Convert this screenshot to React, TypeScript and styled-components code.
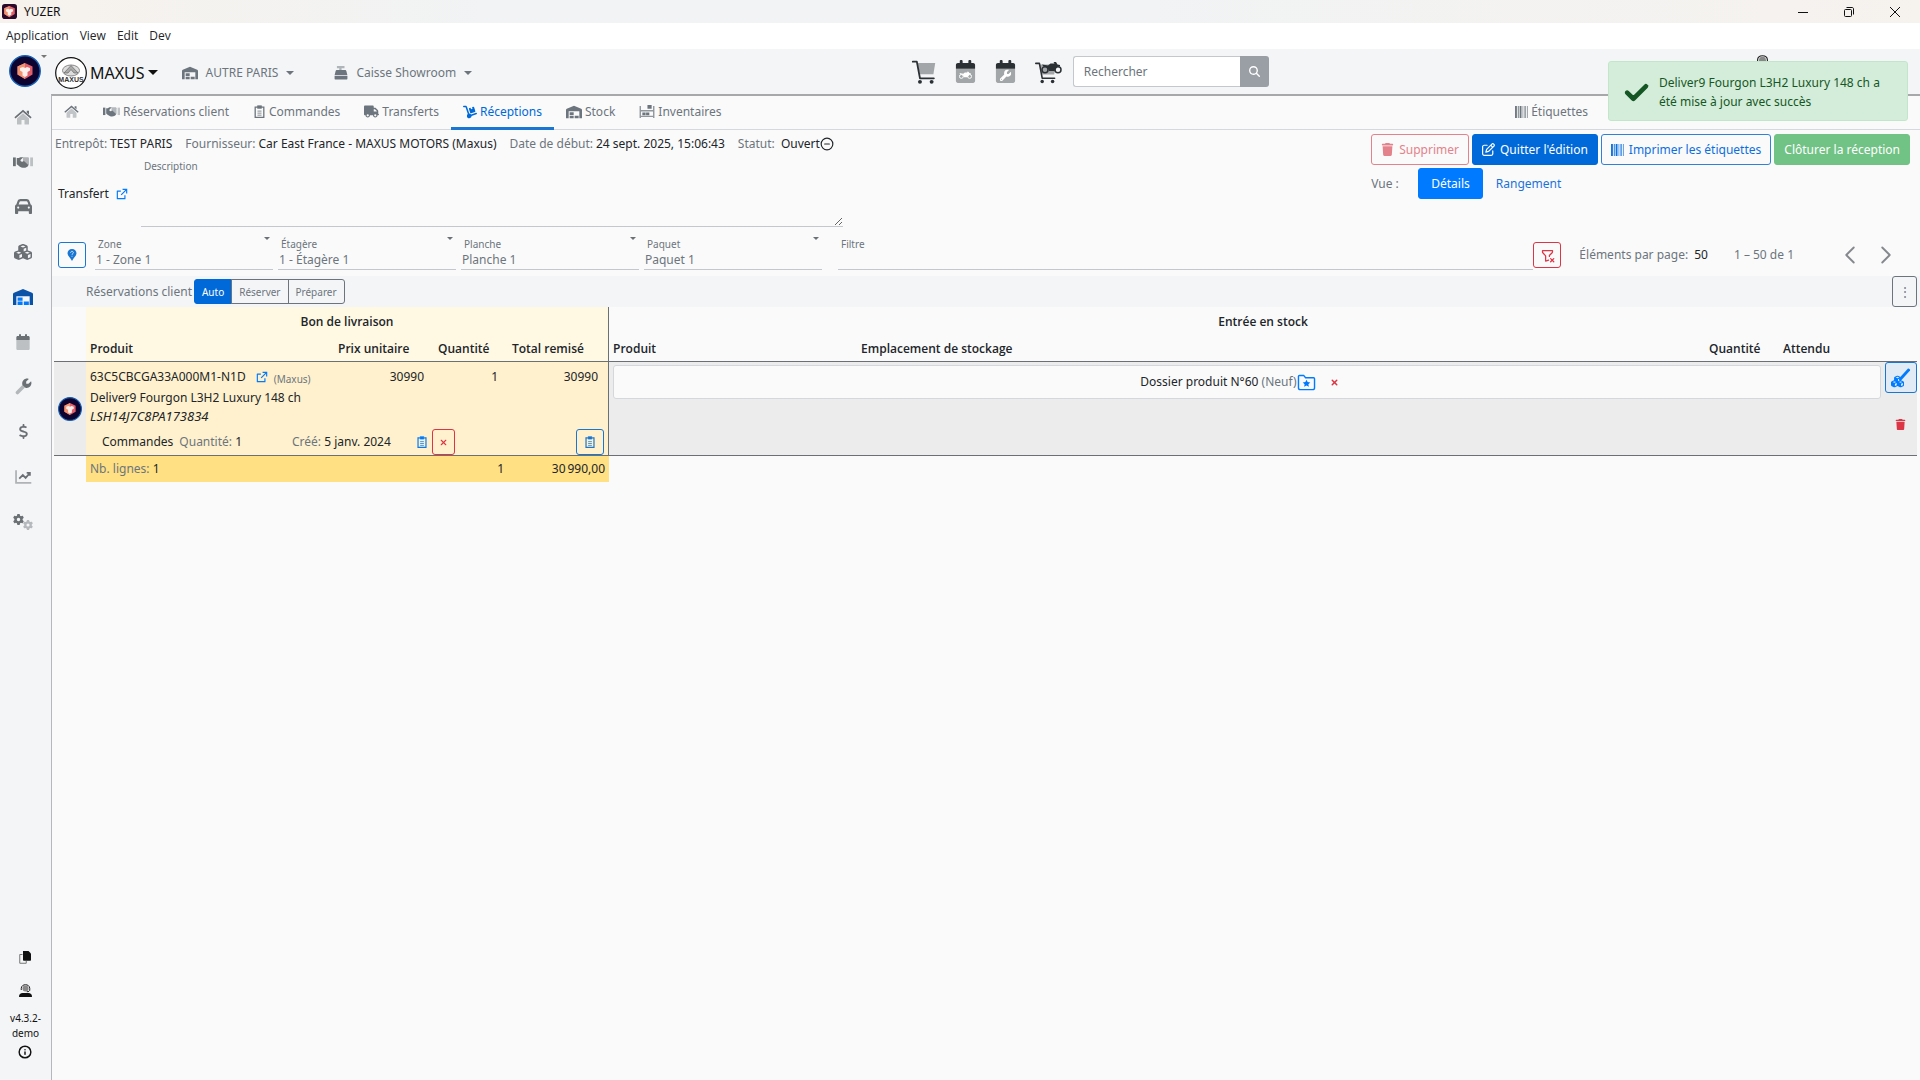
import React from 'react';
import styled, { createGlobalStyle, css } from 'styled-components';
import {
  FaCar,
  FaCheck,
  FaCubes,
  FaDollarSign,
  FaDolly,
  FaMagnifyingGlass,
  FaRegPenToSquare,
  FaTrash,
  FaTruck,
  FaWrench,
  FaGear,
} from 'react-icons/fa6';
import { RiExternalLinkLine } from 'react-icons/ri';
import { TbFilterX } from 'react-icons/tb';
import { CircleMinus, Info, ChevronLeft, ChevronRight, X } from 'lucide-react';

const c = {
  text: '#212529',
  muted: '#6c757d',
  line: '#c4c8cc',
  dark: '#6b7075',
  blue: '#007bff',
  blueDark: '#0069d9',
  red: '#dc3545',
  bar: '#f4f5f7',
  page: '#fafafa',
};

const GlobalStyle = createGlobalStyle`
  *, *::before, *::after { box-sizing: border-box; }
  body {
    margin: 0;
    font-family: "Noto Sans", "Open Sans", sans-serif;
    font-size: 12px;
    line-height: 18px;
    color: ${c.text};
    background: ${c.page};
  }
  button, input, select, textarea { font: inherit; color: inherit; }
  button { cursor: pointer; }
  a { color: inherit; text-decoration: none; }
  svg { flex: none; display: block; }
`;

/* ---------- Icons ---------- */

type IconProps = { size?: number };

const HomeIcon = ({ size = 18 }: IconProps) => (
  <svg width={size} height={size} viewBox="0 0 24 24" fill="currentColor" aria-hidden>
    <path opacity=".4" d="M12 7 4 14v7.200c0 .5.400.8.800.8H10v-6h4v6h5.200c.5 0 .8-.4.8-.8V14z" />
    <path d="M12 2.200 23.500 12.300l-1.500 1.800L12 5.400 2 14.100.5 12.300z" />
    <path d="M17 3.500h3v5l-3-2.600z" />
  </svg>
);

const HandsIcon = ({ size = 20 }: IconProps) => (
  <svg width={size} height={size} viewBox="0 0 640 512" fill="currentColor" aria-hidden>
    <path d="M0 110h90v280H0z" />
    <path opacity=".4" d="M550 110h90v280h-90z" />
    <path opacity=".5" d="M320 100h170l20 30v230H320z" />
    <path d="M120 130h60l60-30h90l-90 90c-10 60 70 70 110 30l140 130c0 60-90 100-180 90-50 0-120-50-190-110z" />
  </svg>
);

const WarehouseIcon = ({ size = 20, roof = 'currentColor' }: IconProps & { roof?: string }) => (
  <svg width={size} height={size} viewBox="0 0 24 24" fill="currentColor" aria-hidden>
    <path fill={roof} d="M12 2.500 1.200 7C.5 7.300 0 8 0 8.700V21.500h4V11h16v10.500h4V8.700c0-.7-.5-1.400-1.200-1.700z" />
    <path d="M5.500 12.500h6v4h-6zM5.500 17.500h6v4h-6zM13 17.500h6v4h-6z" />
  </svg>
);

const CalendarIcon = ({ size = 18, children }: IconProps & { children?: React.ReactNode }) => (
  <svg width={size} height={size} viewBox="0 0 24 24" fill="currentColor" aria-hidden>
    <path opacity=".4" d="M2 9h20v13c0 1-1 2-2 2H4c-1 0-2-1-2-2z" />
    <path d="M6 1c0-1.300 3-1.300 3 0v2h6V1c0-1.300 3-1.300 3 0v2h2c1 0 2 1 2 2v4H2V5c0-1 1-2 2-2h2z" />
    {children}
  </svg>
);

const Moto = ({ x, y, width, color }: { x: number; y: number; width: number; color: string }) => (
  <svg x={x} y={y} width={width} height={(width * 24) / 42} viewBox="0 0 42 24" fill={color} aria-hidden>
    <circle cx="8" cy="15.500" r="6" fill="none" stroke={color} strokeWidth="3" />
    <circle cx="34" cy="15.500" r="6" fill="none" stroke={color} strokeWidth="3" />
    <path d="M2 5 14 7l5-4h8l-2-3h5l3 5 5 1v3h-5l-6 9H16l-3-7-8-2z" />
  </svg>
);

const WrenchIcon = () => (
  <svg width={17} height={17} viewBox="0 0 24 24" aria-hidden>
    <path d="M3.500 20.500 14 10" stroke="#b4b7ba" strokeWidth="5" strokeLinecap="round" fill="none" />
    <path d="M19.500 1.300 15.800 5v3.200H19l3.700-3.700c2 5.500-2.500 10.700-8 9.200L10.500 10C8.800 4.500 14-.8 19.500 1.300z" fill="currentColor" />
  </svg>
);

const ChartIcon = () => (
  <svg width={17} height={17} viewBox="0 0 24 24" fill="none" stroke="currentColor" aria-hidden>
    <path opacity=".5" d="M1.500 3v18H23" strokeWidth="2.500" />
    <path d="m6 15 5-5 4 4 6-7M16.500 7H21v4" strokeWidth="2.500" />
  </svg>
);

const GearsIcon = () => (
  <svg width={20} height={16} viewBox="0 0 40 32" fill="currentColor" aria-hidden>
    <FaGear size={22} x={0} y={0} />
    <g opacity=".45">
      <FaGear size={20} x={20} y={12} />
    </g>
  </svg>
);

const CartShape = () => (
  <>
    <path opacity=".4" fill="#2b3035" d="M6 4.500h20l-2 12.500H9z" />
    <path d="M1 3h4.500L9 21.500h15.500" fill="none" stroke="#2b3035" strokeWidth="2" strokeLinecap="round" strokeLinejoin="round" />
    <circle cx="9" cy="25.500" r="2.200" fill="#2b3035" />
    <circle cx="22" cy="25.500" r="2.200" fill="#2b3035" />
  </>
);

const CartIcon = () => (
  <svg width={26} height={26} viewBox="0 0 27 29" aria-hidden>
    <CartShape />
  </svg>
);

const MotoCartIcon = () => (
  <svg width={28} height={24} viewBox="0 0 28 24" aria-hidden>
    <g transform="translate(1 1) scale(.8)">
      <CartShape />
    </g>
    <Moto x={7} y={2} width={21} color="#2b3035" />
  </svg>
);

const RegisterIcon = () => (
  <svg width={14} height={14} viewBox="0 0 24 24" fill="currentColor" aria-hidden>
    <path opacity=".5" d="M5 0h13v4h-5v4H9V4H5z" />
    <path d="M5 7h14c1 0 2 1 2.300 2l1.700 7H1l1.700-7C3 8 4 7 5 7zM1 17h22v5c0 .6-.4 1-1 1H2c-.6 0-1-.4-1-1z" />
  </svg>
);

const ShelfIcon = () => (
  <svg width={16} height={13} viewBox="0 0 32 28" fill="currentColor" aria-hidden>
    <path opacity=".75" d="M0 2h3v26H0zM29 2h3v26h-3zM3 11h26v3H3zM3 23h26v3H3z" />
    <path d="M17 0h9v8h-9zM6 16h7v6H6zM14 16h7v6h-7z" />
  </svg>
);

const BarcodeIcon = () => (
  <svg width={13} height={12} viewBox="0 0 14 13" fill="currentColor" aria-hidden>
    <path d="M0 0h2v13H0zM3 0h1v13H3zM5 0h2v13H5z" />
    <path opacity=".65" d="M8 0h1v13H8zM10 0h2v13h-2zM13 0h1v13h-1z" />
  </svg>
);

const ClipIcon = ({ size = 13 }: IconProps) => (
  <svg width={size} height={size} viewBox="0 0 16 16" fill="none" stroke="currentColor" aria-hidden>
    <path d="M5 2.500H2.700v12.700h10.600V2.500H11" strokeWidth="1.600" />
    <path d="M5.500 1h5v3h-5z" fill="currentColor" />
    <path d="M5.500 7.500h5M5.500 10h5M5.500 12.500h5" strokeWidth="1" />
  </svg>
);

const PinIcon = () => (
  <svg width={10} height={12} viewBox="0 0 12 16" aria-hidden>
    <path fill="currentColor" d="M6 0C2.500 0 0 2.600 0 5.800 0 9 3.500 11 6 16c2.500-5 6-7 6-10.200C12 2.600 9.500 0 6 0z" />
    <path d="M4.200 5c0-2.600 3.700-2.300 3.600-.2C7.800 6.200 6 6.200 6 7.800M6 9v1.300" fill="none" stroke="#fff" strokeWidth="1" />
  </svg>
);

const FolderStarIcon = () => (
  <svg width={19} height={17} viewBox="0 0 20 18" aria-hidden>
    <path d="M1.500 14.500v-12c0-.6.4-1 1-1H7l2 2.500h8.500c.6 0 1 .4 1 1v9.500c0 1-.7 2-2 2h-13c-1.300 0-2-1-2-2z" fill="none" stroke="currentColor" strokeWidth="1.500" />
    <path d="m10 6 1.200 2.500 2.800.4-2 1.900.5 2.700-2.500-1.300-2.500 1.300.5-2.700-2-1.900 2.800-.4z" fill="currentColor" />
  </svg>
);

const PenCubesIcon = () => (
  <svg width={20} height={20} viewBox="0 0 20 20" fill="currentColor" aria-hidden>
    <path d="M17 .6c.6-.6 2.600 1 2 1.800L10.500 12l-2.700.8.600-2.800z" />
    <FaCubes size={13} x={0} y={7} />
  </svg>
);

const CopyIcon = () => (
  <svg width={12} height={13} viewBox="0 0 24 26" aria-hidden>
    <path d="M7 7H1.500v17.500h13V20" fill="none" stroke="#777" strokeWidth="2" />
    <path d="M8 0h11l5 5v13c0 1-.6 1.500-1.500 1.500h-13C8.500 19.500 8 19 8 18z" fill="#111" />
  </svg>
);

const SupportIcon = ({ size = 13 }: IconProps) => (
  <svg width={size} height={size} viewBox="0 0 26 26" aria-hidden>
    <circle cx="13" cy="9" r="6" fill="#888" />
    <path d="M4.500 12V8.500C5-1 21-1 21.500 8.500V12c0 2-2 3.500-6 3.500" fill="none" stroke="#222" strokeWidth="2" />
    <path d="M0 26c0-6 3-8 7-8h12c4 0 7 2 7 8z" fill="#111" />
  </svg>
);

const Caret = ({ size = 10 }: IconProps) => (
  <svg width={size} height={size / 2} viewBox="0 0 10 5" fill="currentColor" aria-hidden>
    <path d="M0 0h10L5 5z" />
  </svg>
);

const CubeLogo = ({ size, square }: { size: number; square?: boolean }) => (
  <svg width={size} height={size} viewBox="0 0 32 32" role="img" aria-label="Yuzer">
    {square ? <rect width="32" height="32" rx="6" fill="#2a0a2c" /> : <circle cx="16" cy="16" r="15.200" fill="#0d0430" stroke="#1560b4" strokeWidth="1.500" />}
    <g transform={square ? 'translate(-8 -8) scale(1.5)' : undefined}>
      <path d="m16 8 7.500 3.500v8L16 24l-7.500-4.500v-8z" fill="#e2606a" />
      <path d="M16 8 8.500 11.500v8L16 24z" fill="#f0936f" />
      <path d="m11 13 3-1 2 1 2-1 3 1v2.500l-2.500 1.500v3.500L16 22l-2.500-1.500V17L11 15.500z" fill="#fff0ec" />
    </g>
  </svg>
);

const MaxusLogo = () => (
  <svg width={32} height={32} viewBox="0 0 32 32" role="img" aria-label="Maxus">
    <circle cx="16" cy="16" r="15.300" fill="#fff" stroke="#111" strokeWidth="1.200" />
    <ellipse cx="16" cy="13.500" rx="8.500" ry="5.500" fill="#ddd" stroke="#888" strokeWidth="1" />
    <path d="M16 8.500 9 16h4l3-3.500 3 3.500h4z" fill="#aaa" stroke="#666" strokeWidth=".7" />
    <text x="16" y="25" textAnchor="middle" fontFamily="Liberation Sans, sans-serif" fontWeight="700" fontSize="7" fill="#333">
      MAXUS
    </text>
  </svg>
);

/* ---------- Window chrome ---------- */

const Shell = styled.div`
  display: flex;
  flex-direction: column;
  min-height: 100vh;
`;

const TitleBar = styled.header`
  display: flex;
  align-items: center;
  height: 23px;
  padding: 0 2px;
  gap: 7px;
  color: #111;
  background: linear-gradient(90deg, #f7f2ec 0, #f1f3f4 25%, #f1f3f4 60%, #f6f2ee 100%);
`;

const WindowButtons = styled.div`
  display: flex;
  margin-left: auto;
`;

const WindowButton = styled.button`
  display: grid;
  place-items: center;
  width: 46px;
  height: 20px;
  padding: 0;
  border: 0;
  background: none;
`;

const MenuBar = styled.nav`
  display: flex;
  align-items: center;
  gap: 11px;
  height: 26px;
  padding: 0 6px;
  font-family: "Open Sans", "Noto Sans", sans-serif;
  background: #fff;
`;

const Body = styled.div`
  display: flex;
  flex: 1;
  background: ${c.bar};
`;

const Sidebar = styled.aside`
  display: flex;
  flex-direction: column;
  align-items: center;
  width: 51px;
  padding: 0 5px 21px 0;
  color: ${c.dark};
`;

const SideLogo = styled.button`
  display: flex;
  align-items: flex-start;
  height: 45px;
  padding: 6px 0 0 10px;
  border: 0;
  color: #777;
  background: none;
`;

const SideLink = styled.a<{ $active?: boolean }>`
  display: grid;
  place-items: center;
  width: 46px;
  height: 45px;
  color: ${(p) => (p.$active ? c.blue : c.dark)};
`;

const SideFooter = styled.div`
  display: flex;
  flex-direction: column;
  align-items: center;
  gap: 9px;
  margin-top: auto;
  padding-left: 5px;
  font-size: 10px;
  line-height: 15px;
  text-align: center;
  color: #111;
`;

const FooterLink = styled.a`
  display: grid;
  place-items: center;
  height: 24px;
`;

const Version = styled.div`
  display: flex;
  flex-direction: column;
  align-items: center;
  gap: 4px;
`;

const Main = styled.div`
  display: flex;
  flex-direction: column;
  flex: 1;
  min-width: 0;
`;

/* ---------- Top header ---------- */

const Header = styled.div`
  display: grid;
  grid-template-columns: 46% auto 1fr;
  align-items: center;
  height: 45px;
`;

const Pickers = styled.div`
  display: flex;
  align-items: center;
  padding: 2px 0 0 4px;
  gap: 24px;
`;

const Picker = styled.button<{ $main?: boolean }>`
  display: flex;
  align-items: center;
  gap: ${(p) => (p.$main ? 3 : 8)}px;
  margin-right: ${(p) => (p.$main ? 0 : 16)}px;
  padding: 0;
  border: 0;
  background: none;
  font-size: ${(p) => (p.$main ? 16 : 12)}px;
  color: ${(p) => (p.$main ? '#111' : c.muted)};
`;

const Tools = styled.div`
  display: flex;
  align-items: center;
  gap: 17px;
`;

const ToolButton = styled.button`
  display: grid;
  place-items: center;
  padding: 0;
  border: 0;
  background: none;
  color: #2b3035;
`;

const Search = styled.form`
  display: flex;
  height: 31px;
  margin-left: -6px;
`;

const SearchInput = styled.input`
  width: 167px;
  padding: 0 10px;
  border: 1px solid ${c.line};
  border-right: 0;
  border-radius: 3px 0 0 3px;
  background: #fff;
  &::placeholder { color: ${c.muted}; opacity: 1; }
`;

const SearchButton = styled.button`
  display: grid;
  place-items: center;
  width: 29px;
  padding: 0;
  border: 0;
  border-radius: 0 3px 3px 0;
  color: #fff;
  background: #9a9fa6;
`;

const Support = styled.a`
  justify-self: end;
  align-self: start;
  margin: 6px 150px 0 0;
`;

/* ---------- Content ---------- */

const Content = styled.main`
  flex: 1;
  border-top: 2px solid #a6a8aa;
  border-left: 1px solid #b5b8bb;
  background: ${c.page};
`;

const Tabs = styled.nav`
  display: flex;
  height: 34px;
  border-bottom: 1px solid #d5d8dc;
`;

const Tab = styled.a<{ $active?: boolean; $end?: boolean }>`
  display: flex;
  align-items: center;
  gap: 3px;
  height: 34px;
  padding: 0 12px;
  color: ${c.muted};
  border-bottom: 3px solid transparent;
  ${(p) => p.$active && css`color: ${c.blueDark}; border-color: #1976d2;`}
  ${(p) => p.$end && css`margin: 0 320px 0 auto;`}
`;

const Summary = styled.section`
  display: flex;
  justify-content: space-between;
  align-items: flex-start;
  padding: 4px 10px 0 3px;
`;

const Facts = styled.dl`
  display: flex;
  gap: 13px;
  margin: 0;
  padding-top: 1px;
`;

const Fact = styled.div`
  display: flex;
  align-items: center;
  gap: 3px;
`;

const FactName = styled.dt`
  color: ${c.muted};
`;

const FactValue = styled.dd`
  display: flex;
  align-items: center;
  margin: 0;
`;

const Muted = styled.span`
  color: ${c.muted};
`;

const DescriptionRow = styled.div`
  display: flex;
  align-items: center;
  gap: 12px;
  height: 77px;
  padding: 0 0 0 3px;
`;

const TransferLink = styled.a`
  display: flex;
  align-items: center;
  gap: 6px;
  padding-top: 4px;
`;

const BlueIcon = styled.span`
  display: inline-flex;
  color: ${c.blue};
`;

const Description = styled.div`
  display: flex;
  flex-direction: column;
  width: 702px;
  margin-top: 3px;
`;

const SmallLabel = styled.label`
  padding-left: 3px;
  font-size: 10px;
  line-height: 14px;
  color: ${c.muted};
`;

const TextArea = styled.textarea`
  height: 54px;
  padding: 0;
  border: 0;
  border-bottom: 1px solid ${c.line};
  background: none;
  resize: vertical;
`;

const Actions = styled.div`
  display: grid;
  gap: 3px;
`;

const ButtonRow = styled.div`
  display: flex;
  align-items: center;
  gap: 3px;
`;

type Tone = 'danger' | 'primary' | 'outline' | 'success' | 'solid' | 'link';

const tones: Record<Tone, ReturnType<typeof css>> = {
  danger: css`color: #e4828b; border-color: #e4828b;`,
  primary: css`color: #fff; background: ${c.blueDark}; border-color: ${c.blueDark};`,
  outline: css`color: #0d6fde; border-color: #2f80d8;`,
  success: css`color: #fff; background: #71c285; border-color: #71c285;`,
  solid: css`padding: 0 12px; color: #fff; background: ${c.blue}; border-color: ${c.blue};`,
  link: css`color: #1a73d9; border-color: transparent;`,
};

const Button = styled.button<{ $tone: Tone }>`
  display: flex;
  align-items: center;
  gap: 5px;
  height: 31px;
  padding: 0 9px;
  border: 1px solid;
  border-radius: 3px;
  white-space: nowrap;
  background: none;
  ${(p) => tones[p.$tone]}
`;

const ViewLabel = styled.span`
  width: 44px;
  color: ${c.muted};
`;

/* ---------- Filters ---------- */

const Filters = styled.section`
  display: flex;
  align-items: flex-end;
  height: 40px;
  padding: 0 22px 0 6px;
`;

const SquareButton = styled.button<{ $color: string; $w?: number; $h?: number }>`
  display: grid;
  place-items: center;
  flex: none;
  width: ${(p) => p.$w ?? 28}px;
  height: ${(p) => p.$h ?? 26}px;
  padding: 0;
  border: 1px solid ${(p) => p.$color};
  border-radius: 3px;
  color: ${(p) => p.$color};
  background: none;
`;

const FilterButton = styled(SquareButton)`
  margin-bottom: 2px;
`;

const Selects = styled.div`
  display: flex;
  gap: 5px;
  margin: 0 16px 0 9px;
`;

const Field = styled.div<{ $grow?: boolean }>`
  display: flex;
  flex-direction: column;
  flex: ${(p) => (p.$grow ? 1 : 'none')};
  width: 178px;
  border-bottom: 1px solid ${c.line};
`;

const FieldTop = styled.div`
  display: flex;
  justify-content: space-between;
  align-items: flex-start;
  padding-right: 3px;
  color: ${c.dark};
`;

const Select = styled.select`
  appearance: none;
  height: 18px;
  padding: 0 1px;
  border: 0;
  background: none;
  color: ${c.muted};
`;

const FilterInput = styled.input`
  height: 18px;
  padding: 0;
  border: 0;
  background: none;
`;

const Pager = styled.div`
  display: flex;
  align-items: center;
  height: 26px;
  margin: 0 0 2px 18px;
  color: ${c.muted};
`;

const PageSize = styled.span`
  margin: 0 26px 0 6px;
  color: ${c.text};
`;

const PageButtons = styled.div`
  display: flex;
  gap: 12px;
  margin-left: 44px;
`;

const PageButton = styled.button`
  display: grid;
  place-items: center;
  place-content: center;
  width: 24px;
  height: 26px;
  padding: 0;
  border: 0;
  color: #85898d;
  background: none;
`;

/* ---------- Reservations bar ---------- */

const Reservations = styled.section`
  display: flex;
  align-items: center;
  gap: 2px;
  height: 31px;
  margin-top: 6px;
  padding: 0 3px 0 34px;
  color: ${c.muted};
  background: ${c.bar};
`;

const Segments = styled.div`
  display: flex;
  margin-right: auto;
`;

const Segment = styled.button<{ $active?: boolean }>`
  height: 25px;
  margin-left: -1px;
  padding: 0 7px;
  border: 1px solid ${(p) => (p.$active ? c.blueDark : c.muted)};
  font-size: 10px;
  color: ${(p) => (p.$active ? '#fff' : c.muted)};
  background: ${(p) => (p.$active ? c.blueDark : 'none')};
  &:first-child { margin-left: 0; border-radius: 3px 0 0 3px; }
  &:last-child { border-radius: 0 3px 3px 0; }
`;

/* ---------- Table ---------- */

const TableWrap = styled.div`
  padding: 0 3px 0 2px;
`;

const Table = styled.table`
  width: 100%;
  table-layout: fixed;
  border-collapse: separate;
  border-spacing: 0;
`;

const Col = styled.col<{ $w?: number }>`
  width: ${(p) => (p.$w ? `${p.$w}px` : 'auto')};
`;

const edge = `1px solid ${c.dark}`;

const Th = styled.th<{ $note?: boolean; $center?: boolean; $edge?: boolean; $rule?: boolean }>`
  height: ${(p) => (p.$rule ? 28 : 27)}px;
  padding: 2px 4px 0;
  font-family: "Open Sans", "Noto Sans", sans-serif;
  font-weight: 600;
  white-space: nowrap;
  text-align: ${(p) => (p.$center ? 'center' : 'left')};
  background: ${(p) => (p.$note ? '#fff8e3' : 'transparent')};
  border-right: ${(p) => (p.$edge ? edge : 0)};
  border-bottom: ${(p) => (p.$rule ? edge : 0)};
`;

type CellProps = { $bg?: string; $right?: boolean; $edge?: boolean; $rule?: boolean; $flush?: boolean };

const Td = styled.td<CellProps>`
  padding: ${(p) => (p.$flush ? '0 4px' : p.$right ? '6px 10px 0 0' : '6px 4px 0')};
  vertical-align: top;
  text-align: ${(p) => (p.$right ? 'right' : 'left')};
  background: ${(p) => p.$bg ?? 'transparent'};
  border-right: ${(p) => (p.$edge ? edge : 0)};
  border-bottom: ${(p) => (p.$rule ? edge : 0)};
`;

const AvatarCell = styled(Td)`
  vertical-align: middle;
`;

const ToolsCell = styled(Td)`
  padding: 0;
`;

const Reference = styled.div`
  display: flex;
  align-items: center;
  gap: 9px;
  height: 18px;
  white-space: nowrap;
`;

const Brand = styled.span`
  margin-left: -4px;
  padding-top: 4px;
  font-size: 10px;
  color: ${c.muted};
`;

const ProductName = styled.div`
  padding-top: 3px;
`;

const Vin = styled.div`
  height: 22px;
  font-size: 13px;
  font-style: italic;
`;

const OrderRow = styled.div`
  display: flex;
  align-items: center;
  gap: 6px;
  height: 26px;
  padding-left: 12px;
`;

const Created = styled.span`
  margin: 0 19px 0 44px;
`;

const OrderTools = styled.div`
  display: flex;
  align-items: center;
  gap: 4px;
  flex: 1;
`;

const LastButton = styled(SquareButton)`
  margin-left: auto;
`;

const Dossier = styled.div`
  display: flex;
  align-items: center;
  justify-content: center;
  height: 34px;
  margin-top: 3px;
  border: 1px solid #d4d8dc;
  border-radius: 3px;
  background: ${c.page};
`;

const IconButton = styled.button<{ $color: string }>`
  display: grid;
  place-items: center;
  width: 32px;
  height: 20px;
  padding: 0;
  border: 0;
  color: ${(p) => p.$color};
  background: none;
`;

const RemoveButton = styled(IconButton)`
  width: 38px;
`;

const RowTools = styled.div`
  display: grid;
  gap: 21px;
`;

const PenButton = styled(SquareButton)`
  border-color: #1976d2;
  background: #e0ebf5;
`;

const TotalCell = styled.td<{ $right?: boolean }>`
  height: 26px;
  padding: 0 4px;
  text-align: ${(p) => (p.$right ? 'right' : 'left')};
  background: #ffe083;
`;

/* ---------- Toast ---------- */

const Toast = styled.div`
  position: fixed;
  top: 61px;
  right: 12px;
  display: flex;
  align-items: center;
  gap: 10px;
  width: 300px;
  height: 60px;
  padding: 2px 16px 0 15px;
  border: 1px solid #c3e6cb;
  border-radius: 3px;
  line-height: 19px;
  color: #155724;
  background: #d4edda;
`;

const sideLinks = [
  { name: 'Accueil', icon: <HomeIcon /> },
  { name: 'Clients', icon: <HandsIcon /> },
  { name: 'Véhicules', icon: <FaCar size={17} /> },
  { name: 'Produits', icon: <FaCubes size={18} /> },
  { name: 'Entrepôt', icon: <WarehouseIcon roof="#0a51a8" />, active: true },
  { name: 'Agenda', icon: <CalendarIcon size={16} /> },
  { name: 'Atelier', icon: <WrenchIcon /> },
  { name: 'Finances', icon: <FaDollarSign size={15} /> },
  { name: 'Statistiques', icon: <ChartIcon /> },
  { name: 'Paramètres', icon: <GearsIcon /> },
];

const tabs = [
  { name: 'Réservations client', icon: <HandsIcon size={17} /> },
  { name: 'Commandes', icon: <ClipIcon /> },
  { name: 'Transferts', icon: <FaTruck size={15} /> },
  { name: 'Réceptions', icon: <FaDolly size={14} />, active: true },
  { name: 'Stock', icon: <WarehouseIcon size={16} /> },
  { name: 'Inventaires', icon: <ShelfIcon /> },
];

const selects = [
  ['Zone', '1 - Zone 1'],
  ['Étagère', '1 - Étagère 1'],
  ['Planche', 'Planche 1'],
  ['Paquet', 'Paquet 1'],
];

const cream = '#fff1cd';
const grey = '#ececec';

export default function App() {
  return (
    <Shell>
      <GlobalStyle />
      <TitleBar>
        <CubeLogo size={15} square />
        <span>YUZER</span>
        <WindowButtons>
          <WindowButton aria-label="Réduire">
            <svg width="10" height="10" viewBox="0 0 10 10" stroke="#111"><path d="M0 5.500h10" /></svg>
          </WindowButton>
          <WindowButton aria-label="Restaurer">
            <svg width="10" height="10" viewBox="0 0 10 10" fill="none" stroke="#111">
              <rect x=".5" y="2.500" width="7" height="7" rx="1" />
              <path d="M2.500.5H8c1 0 1.500.5 1.500 1.500v5.500" />
            </svg>
          </WindowButton>
          <WindowButton aria-label="Fermer">
            <svg width="10" height="10" viewBox="0 0 10 10" stroke="#111"><path d="m0 0 10 10M10 0 0 10" /></svg>
          </WindowButton>
        </WindowButtons>
      </TitleBar>
      <MenuBar>
        <a href="#application">Application</a>
        <a href="#view">View</a>
        <a href="#edit">Edit</a>
        <a href="#dev">Dev</a>
      </MenuBar>

      <Body>
        <Sidebar>
          <SideLogo aria-label="Compte">
            <CubeLogo size={32} />
            <Caret size={6} />
          </SideLogo>
          {sideLinks.map((l) => (
            <SideLink key={l.name} href="#" aria-label={l.name} $active={l.active}>
              {l.icon}
            </SideLink>
          ))}
          <SideFooter>
            <FooterLink href="#copier" aria-label="Copier"><CopyIcon /></FooterLink>
            <FooterLink href="#support" aria-label="Support"><SupportIcon /></FooterLink>
            <Version>
              <span>v4.3.2-<br />demo</span>
              <Info size={14} strokeWidth={2.5} />
            </Version>
          </SideFooter>
        </Sidebar>

        <Main>
          <Header>
            <Pickers>
              <Picker $main>
                <MaxusLogo />
                MAXUS
                <Caret size={10} />
              </Picker>
              <Picker>
                <WarehouseIcon size={16} />
                AUTRE PARIS
                <Caret size={8} />
              </Picker>
              <Picker>
                <RegisterIcon />
                Caisse Showroom
                <Caret size={8} />
              </Picker>
            </Pickers>
            <Tools>
              <ToolButton aria-label="Panier"><CartIcon /></ToolButton>
              <ToolButton aria-label="Agenda véhicules">
                <CalendarIcon size={23}>
                  <Moto x={5} y={12} width={14} color="#fff" />
                </CalendarIcon>
              </ToolButton>
              <ToolButton aria-label="Agenda atelier">
                <CalendarIcon size={23}>
                  <FaWrench size={12} x={6} y={10} color="#fff" />
                </CalendarIcon>
              </ToolButton>
              <ToolButton aria-label="Panier véhicules"><MotoCartIcon /></ToolButton>
              <Search onSubmit={(e) => e.preventDefault()}>
                <SearchInput aria-label="Rechercher" placeholder="Rechercher" />
                <SearchButton aria-label="Lancer la recherche"><FaMagnifyingGlass size={11} /></SearchButton>
              </Search>
            </Tools>
            <Support href="#assistance" aria-label="Assistance"><SupportIcon size={15} /></Support>
          </Header>

          <Content>
            <Tabs>
              <Tab href="#accueil" aria-label="Accueil"><HomeIcon size={15} /></Tab>
              {tabs.map((t) => (
                <Tab key={t.name} href="#" $active={t.active}>
                  {t.icon}
                  {t.name}
                </Tab>
              ))}
              <Tab href="#etiquettes" $end><BarcodeIcon />Étiquettes</Tab>
            </Tabs>

            <Summary>
              <div>
                <Facts>
                  <Fact><FactName>Entrepôt:</FactName><FactValue>TEST PARIS</FactValue></Fact>
                  <Fact><FactName>Fournisseur:</FactName><FactValue>Car East France - MAXUS MOTORS (Maxus)</FactValue></Fact>
                  <Fact><FactName>Date de début:</FactName><FactValue>24 sept. 2025, 15:06:43</FactValue></Fact>
                  <Fact><FactName>Statut:</FactName><FactValue>&nbsp;Ouvert <CircleMinus size={14} /></FactValue></Fact>
                </Facts>
                <DescriptionRow>
                  <TransferLink href="#transfert">
                    Transfert
                    <BlueIcon><RiExternalLinkLine size={14} /></BlueIcon>
                  </TransferLink>
                  <Description>
                    <SmallLabel htmlFor="description">Description</SmallLabel>
                    <TextArea id="description" />
                  </Description>
                </DescriptionRow>
              </div>
              <Actions>
                <ButtonRow>
                  <Button $tone="danger"><FaTrash size={13} />Supprimer</Button>
                  <Button $tone="primary"><FaRegPenToSquare size={13} />Quitter l'édition</Button>
                  <Button $tone="outline"><BarcodeIcon />Imprimer les étiquettes</Button>
                  <Button $tone="success">Clôturer la réception</Button>
                </ButtonRow>
                <ButtonRow>
                  <ViewLabel>Vue :</ViewLabel>
                  <Button $tone="solid">Détails</Button>
                  <Button $tone="link">Rangement</Button>
                </ButtonRow>
              </Actions>
            </Summary>

            <Filters>
              <FilterButton $color="#1976d2" aria-label="Emplacement"><PinIcon /></FilterButton>
              <Selects>
                {selects.map(([label, value]) => (
                  <Field key={label}>
                    <FieldTop>
                      <SmallLabel htmlFor={label}>{label}</SmallLabel>
                      <Caret size={6} />
                    </FieldTop>
                    <Select id={label} defaultValue={value}>
                      <option>{value}</option>
                    </Select>
                  </Field>
                ))}
              </Selects>
              <Field $grow>
                <SmallLabel htmlFor="filtre">Filtre</SmallLabel>
                <FilterInput id="filtre" />
              </Field>
              <FilterButton $color={c.red} aria-label="Effacer le filtre"><TbFilterX size={15} /></FilterButton>
              <Pager>
                Éléments par page: <PageSize>50</PageSize> 1 – 50 de 1
                <PageButtons>
                  <PageButton aria-label="Page précédente"><ChevronLeft size={30} strokeWidth={1.5} /></PageButton>
                  <PageButton aria-label="Page suivante"><ChevronRight size={30} strokeWidth={1.5} /></PageButton>
                </PageButtons>
              </Pager>
            </Filters>

            <Reservations>
              Réservations client
              <Segments>
                <Segment $active>Auto</Segment>
                <Segment>Réserver</Segment>
                <Segment>Préparer</Segment>
              </Segments>
              <SquareButton $color={c.muted} $w={25} $h={31} aria-label="Plus d'options">⋮</SquareButton>
            </Reservations>

            <TableWrap>
              <Table>
                <colgroup>
                  <Col $w={32} />
                  <Col $w={248} />
                  <Col $w={100} />
                  <Col $w={74} />
                  <Col $w={101} />
                  <Col $w={248} />
                  <Col />
                  <Col $w={74} />
                  <Col $w={106} />
                  <Col $w={32} />
                </colgroup>
                <thead>
                  <tr>
                    <Th />
                    <Th $note $center $edge colSpan={4}>Bon de livraison</Th>
                    <Th $center colSpan={5}>Entrée en stock</Th>
                  </tr>
                  <tr>
                    <Th $rule />
                    <Th $note $rule>Produit</Th>
                    <Th $note $rule>Prix unitaire</Th>
                    <Th $note $rule>Quantité</Th>
                    <Th $note $rule $edge>Total remisé</Th>
                    <Th $rule>Produit</Th>
                    <Th $rule>Emplacement de stockage</Th>
                    <Th $rule>Quantité</Th>
                    <Th $rule>Attendu</Th>
                    <Th $rule />
                  </tr>
                </thead>
                <tbody>
                  <tr>
                    <AvatarCell $bg={grey} $rule $flush rowSpan={2}><CubeLogo size={24} /></AvatarCell>
                    <Td $bg={cream}>
                      <Reference>
                        63C5CBCGA33A000M1-N1D
                        <BlueIcon><RiExternalLinkLine size={14} /></BlueIcon>
                        <Brand>(Maxus)</Brand>
                      </Reference>
                      <ProductName>Deliver9 Fourgon L3H2 Luxury 148 ch</ProductName>
                      <Vin>LSH14J7C8PA173834</Vin>
                    </Td>
                    <Td $bg={cream} $right>30990</Td>
                    <Td $bg={cream} $right>1</Td>
                    <Td $bg={cream} $right $edge>30990</Td>
                    <Td $bg={grey} $rule $flush colSpan={4} rowSpan={2}>
                      <Dossier>
                        Dossier produit N°60&nbsp;<Muted>(Neuf)</Muted>
                        <BlueIcon><FolderStarIcon /></BlueIcon>
                        <RemoveButton $color={c.red} aria-label="Retirer le dossier"><X size={9} strokeWidth={4} /></RemoveButton>
                      </Dossier>
                    </Td>
                    <ToolsCell $bg={grey} $rule rowSpan={2}>
                      <RowTools>
                        <PenButton $color={c.blue} $w={32} $h={31} aria-label="Modifier la ligne"><PenCubesIcon /></PenButton>
                        <IconButton $color={c.red} aria-label="Supprimer la ligne"><FaTrash size={11} /></IconButton>
                      </RowTools>
                    </ToolsCell>
                  </tr>
                  <tr>
                    <Td $bg={cream} $rule $flush $edge colSpan={4}>
                      <OrderRow>
                        <span>Commandes</span>
                        <span><Muted>Quantité:</Muted> 1</span>
                        <Created><Muted>Créé:</Muted> 5 janv. 2024</Created>
                        <OrderTools>
                          <BlueIcon><ClipIcon size={12} /></BlueIcon>
                          <SquareButton $color={c.red} $w={23} aria-label="Retirer la commande"><X size={9} strokeWidth={3} /></SquareButton>
                          <LastButton $color="#1976d2" aria-label="Lier une commande"><ClipIcon size={12} /></LastButton>
                        </OrderTools>
                      </OrderRow>
                    </Td>
                  </tr>
                </tbody>
                <tfoot>
                  <tr>
                    <td />
                    <TotalCell colSpan={2}><Muted>Nb. lignes:</Muted> 1</TotalCell>
                    <TotalCell $right>1</TotalCell>
                    <TotalCell $right>30&#8239;990,00</TotalCell>
                  </tr>
                </tfoot>
              </Table>
            </TableWrap>
          </Content>
        </Main>
      </Body>

      <Toast role="status">
        <FaCheck size={25} stroke="currentColor" strokeWidth={30} />
        <span>Deliver9 Fourgon L3H2 Luxury 148 ch a été mise à jour avec succès</span>
      </Toast>
    </Shell>
  );
}
